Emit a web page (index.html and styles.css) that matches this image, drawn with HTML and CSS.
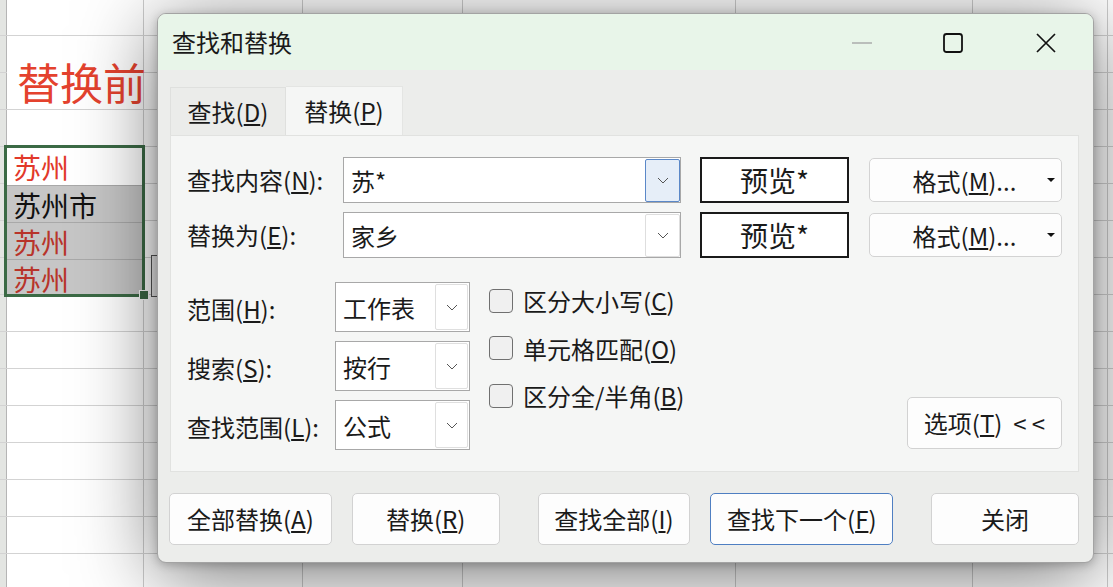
FILE: index.html
```html
<!DOCTYPE html>
<html lang="zh-CN">
<head>
<meta charset="utf-8">
<title>查找和替换</title>
<link rel="stylesheet" href="styles.css">
</head>
<body>
<div class="screen">
  <div class="sheet">
    <div class="sheet-title">替换前</div>
    <div class="selection">
      <div class="cell red">苏州</div>
      <div class="cell hl">苏州市</div>
      <div class="cell hl dred">苏州</div>
      <div class="cell hl dred last">苏州</div>
      <span class="fill-handle"></span>
    </div>
    <span class="autofill-btn"></span>
  </div>

  <div class="dialog">
    <div class="titlebar">
      <div class="title">查找和替换</div>
      <div class="caption">
        <div class="cap cap-min"><svg width="22" height="4" viewBox="0 0 22 4"><line x1="1" y1="2" x2="21" y2="2" stroke="#ababab" stroke-width="1.4"/></svg></div>
        <div class="cap cap-max"><svg width="22" height="22" viewBox="0 0 22 22"><rect x="2" y="2" width="18" height="18" rx="2.5" fill="none" stroke="#111" stroke-width="1.8"/></svg></div>
        <div class="cap cap-close"><svg width="22" height="22" viewBox="0 0 22 22"><path d="M2 2 L20 20 M20 2 L2 20" stroke="#111" stroke-width="1.7" fill="none"/></svg></div>
      </div>
    </div>

    <div class="content">
      <div class="tabs">
        <div class="tab">查找(<u>D</u>)</div>
        <div class="tab active">替换(<u>P</u>)</div>
      </div>

      <div class="panel">
        <div class="frow">
          <div class="flabel">查找内容(<u>N</u>):</div>
          <div class="combo">
            <span class="combo-text">苏*</span>
            <span class="seg seg-focus"><svg width="12" height="7" viewBox="0 0 12 7"><path d="M1 1 L6 6 L11 1" fill="none" stroke="#555" stroke-width="1"/></svg></span>
          </div>
          <div class="preview">预览*</div>
          <div class="fmt">格式(<u>M</u>)...</div>
        </div>
        <div class="frow second">
          <div class="flabel">替换为(<u>E</u>):</div>
          <div class="combo">
            <span class="combo-text">家乡</span>
            <span class="seg"><svg width="12" height="7" viewBox="0 0 12 7"><path d="M1 1 L6 6 L11 1" fill="none" stroke="#555" stroke-width="1"/></svg></span>
          </div>
          <div class="preview">预览*</div>
          <div class="fmt">格式(<u>M</u>)...</div>
        </div>

        <div class="options">
          <div class="opt-grid">
            <div class="olabel">范围(<u>H</u>):</div>
            <div class="select"><span class="select-text">工作表</span><span class="sseg"><svg width="12" height="7" viewBox="0 0 12 7"><path d="M1 1 L6 6 L11 1" fill="none" stroke="#555" stroke-width="1"/></svg></span></div>
            <div class="olabel">搜索(<u>S</u>):</div>
            <div class="select"><span class="select-text">按行</span><span class="sseg"><svg width="12" height="7" viewBox="0 0 12 7"><path d="M1 1 L6 6 L11 1" fill="none" stroke="#555" stroke-width="1"/></svg></span></div>
            <div class="olabel">查找范围(<u>L</u>):</div>
            <div class="select"><span class="select-text">公式</span><span class="sseg"><svg width="12" height="7" viewBox="0 0 12 7"><path d="M1 1 L6 6 L11 1" fill="none" stroke="#555" stroke-width="1"/></svg></span></div>
          </div>
          <div class="checks">
            <label class="check"><span class="box"></span>区分大小写(<u>C</u>)</label>
            <label class="check"><span class="box"></span>单元格匹配(<u>O</u>)</label>
            <label class="check"><span class="box"></span>区分全/半角(<u>B</u>)</label>
          </div>
          <div class="btn more">选项(<u>T</u>)&nbsp; &lt; &lt;</div>
        </div>
      </div>

      <div class="footer">
        <div class="btn b1">全部替换(<u>A</u>)</div>
        <div class="btn b2">替换(<u>R</u>)</div>
        <div class="btn b3">查找全部(<u>I</u>)</div>
        <div class="btn b4 primary">查找下一个(<u>F</u>)</div>
        <div class="btn b5">关闭</div>
      </div>
    </div>
  </div>
</div>
</body>
</html>
```

FILE: styles.css
```css
html, body {
  margin: 0;
  padding: 0;
}

body {
  font-family: "Noto Sans CJK SC", "Noto Sans", sans-serif;
  background: #fff;
}

.screen {
  position: relative;
  width: 1113px;
  height: 587px;
  overflow: hidden;
}

/* ---------- spreadsheet ---------- */
.sheet {
  width: 1113px;
  height: 587px;
  box-sizing: border-box;
  padding-top: 36px;
  background:
    repeating-linear-gradient(to bottom, transparent 0 35px, #d3d3d3 35px 36px, transparent 36px 37px),
    linear-gradient(to right, #e3e5e2 0 6px, #b5b5b5 6px 7px, transparent 7px 143px, #cdcdcd 143px 144px, transparent 144px 302px, #cdcdcd 302px 303px, transparent 303px 462px, #cdcdcd 462px 463px, transparent 463px 735px, #cdcdcd 735px 736px, transparent 736px 972px, #cdcdcd 972px 973px, transparent 973px 1107px, #cdcdcd 1107px 1108px, transparent 1108px),
    #fff;
}

.sheet-title {
  margin-left: 7px;
  width: 136px;
  height: 73px;
  box-sizing: border-box;
  padding-top: 17px;
  padding-left: 10px;
  background: #fff;
  font-size: 43px;
  line-height: 56px;
  color: #e4422e;
  white-space: nowrap;
  overflow: visible;
}

.selection {
  position: relative;
  margin-top: 36px;
  margin-left: 4px;
  width: 141px;
  height: 152px;
  box-sizing: border-box;
  border: 3px solid #3b6a45;
}

.cell {
  height: 37px;
  box-sizing: border-box;
  padding-left: 6px;
  font-size: 28px;
  line-height: 38px;
  color: #111;
  white-space: nowrap;
}

.cell.last {
  height: 35px;
}

.cell.red {
  color: #e2392a;
  background: #fff;
}

.cell.hl {
  background: #c6c6c6;
  border-top: 1px solid #a9a9a9;
}

.cell.dred {
  color: #b8342a;
}

.fill-handle {
  position: absolute;
  right: -7px;
  bottom: -6px;
  width: 8px;
  height: 8px;
  background: #3b6a45;
  border: 1px solid #fff;
}

.autofill-btn {
  position: absolute;
  left: 151px;
  top: 255px;
  width: 14px;
  height: 42px;
  box-sizing: border-box;
  border: 1px solid #555;
  background: #f3f3f3;
}

/* ---------- dialog ---------- */
.dialog {
  position: absolute;
  left: 157px;
  top: 13px;
  width: 937px;
  height: 550px;
  box-sizing: border-box;
  border: 1px solid #a3a3a3;
  border-radius: 9px;
  background: #ecedeb;
  box-shadow: 0 12px 80px rgba(0, 0, 0, 0.55), 0 2px 10px rgba(0, 0, 0, 0.22);
  overflow: hidden;
  display: flex;
  flex-direction: column;
  color: #1a1a1a;
  font-size: 24px;
}

.titlebar {
  height: 56px;
  flex: none;
  display: flex;
  align-items: center;
  background: #e8f5e9;
}

.title {
  padding-left: 14px;
  font-size: 24px;
  line-height: 30px;
  color: #1a1a1a;
}

.caption {
  margin-left: auto;
  display: flex;
  height: 100%;
}

.cap {
  display: flex;
  align-items: center;
  justify-content: center;
  height: 100%;
  padding-top: 1px;
  box-sizing: border-box;
}

.cap-min { width: 90px; }
.cap-max { width: 92px; }
.cap-close { width: 94px; }

.content {
  padding: 17px 14px 0 12px;
  display: flex;
  flex-direction: column;
}

.tabs {
  display: flex;
  height: 48px;
  align-items: flex-end;
}

.tab {
  width: 116px;
  height: 48px;
  box-sizing: border-box;
  display: flex;
  align-items: center;
  justify-content: center;
  border: 1px solid #dfe0de;
  border-bottom: none;
  background: #ebecea;
  line-height: 30px;
}

.tab.active {
  width: 117px;
  height: 49px;
  background: #f5f6f5;
  border-left: none;
  border-color: #e4e5e3;
}

.panel {
  height: 337px;
  box-sizing: border-box;
  background: #f5f6f5;
  border: 1px solid #e1e2e0;
  padding: 21px 16px 0 16px;
}

.frow {
  display: flex;
  align-items: center;
  height: 46px;
}

.frow.second {
  margin-top: 9px;
}

.flabel {
  width: 156px;
  flex: none;
  white-space: nowrap;
  line-height: 30px;
}

.combo {
  width: 338px;
  height: 46px;
  flex: none;
  box-sizing: border-box;
  border: 1px solid #a8a8a8;
  background: #fff;
  display: flex;
  align-items: stretch;
}

.combo-text {
  flex: 1;
  padding-left: 7px;
  display: flex;
  align-items: center;
  font-size: 24px;
}

.seg {
  width: 35px;
  margin: 1px 0 0 0;
  height: 43px;
  box-sizing: border-box;
  border: 1px solid #dedede;
  border-radius: 2px;
  background: #fff;
  display: flex;
  align-items: center;
  justify-content: center;
}

.seg.seg-focus {
  border-color: #5b88c8;
  background: #e6eef8;
}

.preview {
  margin-left: 19px;
  width: 149px;
  height: 46px;
  flex: none;
  box-sizing: border-box;
  border: 2px solid #1a1a1a;
  background: #fff;
  display: flex;
  align-items: center;
  justify-content: center;
  font-size: 28px;
}

.fmt {
  position: relative;
  margin-left: 20px;
  width: 193px;
  height: 44px;
  flex: none;
  box-sizing: border-box;
  border: 1px solid #d3d3d3;
  border-radius: 5px;
  background: #fdfdfd;
  display: flex;
  align-items: center;
  justify-content: center;
  padding-right: 2px;
}

.fmt::after {
  content: "";
  position: absolute;
  right: 6px;
  top: 19px;
  border-left: 4px solid transparent;
  border-right: 4px solid transparent;
  border-top: 4px solid #111;
}

.options {
  margin-top: 24px;
  display: flex;
  align-items: flex-start;
}

.opt-grid {
  display: grid;
  grid-template-columns: 148px 135px;
  grid-auto-rows: 50px;
  row-gap: 9px;
  align-items: center;
}

.olabel {
  white-space: nowrap;
  line-height: 30px;
  padding-top: 4px;
}

.select {
  width: 135px;
  height: 50px;
  box-sizing: border-box;
  border: 1px solid #a8a8a8;
  background: #fff;
  display: flex;
  align-items: stretch;
}

.select-text {
  flex: 1;
  padding-left: 7px;
  display: flex;
  align-items: center;
}

.sseg {
  width: 33px;
  margin: 1px 1px 1px 0;
  box-sizing: border-box;
  border: 1px solid #dfdfdf;
  border-radius: 2px;
  display: flex;
  align-items: center;
  justify-content: center;
}

.checks {
  margin-left: 19px;
  margin-top: -5px;
  display: flex;
  flex-direction: column;
}

.check {
  height: 47.5px;
  display: flex;
  align-items: center;
  white-space: nowrap;
}

.box {
  width: 24px;
  height: 24px;
  box-sizing: border-box;
  border: 1.5px solid #707070;
  border-radius: 4px;
  background: #f0f0f0;
  margin-right: 10px;
  flex: none;
}

.btn {
  box-sizing: border-box;
  border: 1px solid #d2d2d2;
  border-radius: 5px;
  background: #fdfdfd;
  display: flex;
  align-items: center;
  justify-content: center;
  white-space: nowrap;
  line-height: 30px;
}

.more {
  margin-left: auto;
  align-self: flex-end;
  margin-bottom: 1px;
  width: 155px;
  height: 52px;
}

.footer {
  margin-top: 21px;
  margin-left: -1px;
  display: flex;
}

.footer .btn {
  height: 52px;
}

.b1 { width: 163px; }
.b2 { width: 148px; margin-left: 20px; }
.b3 { width: 153px; margin-left: 38px; }
.b4 { width: 183px; margin-left: 20px; }
.b5 { width: 148px; margin-left: 38px; }

.btn.primary {
  border-color: #4f7fc2;
}

u {
  text-decoration-thickness: 1.5px;
  text-underline-offset: 2px;
}
```
